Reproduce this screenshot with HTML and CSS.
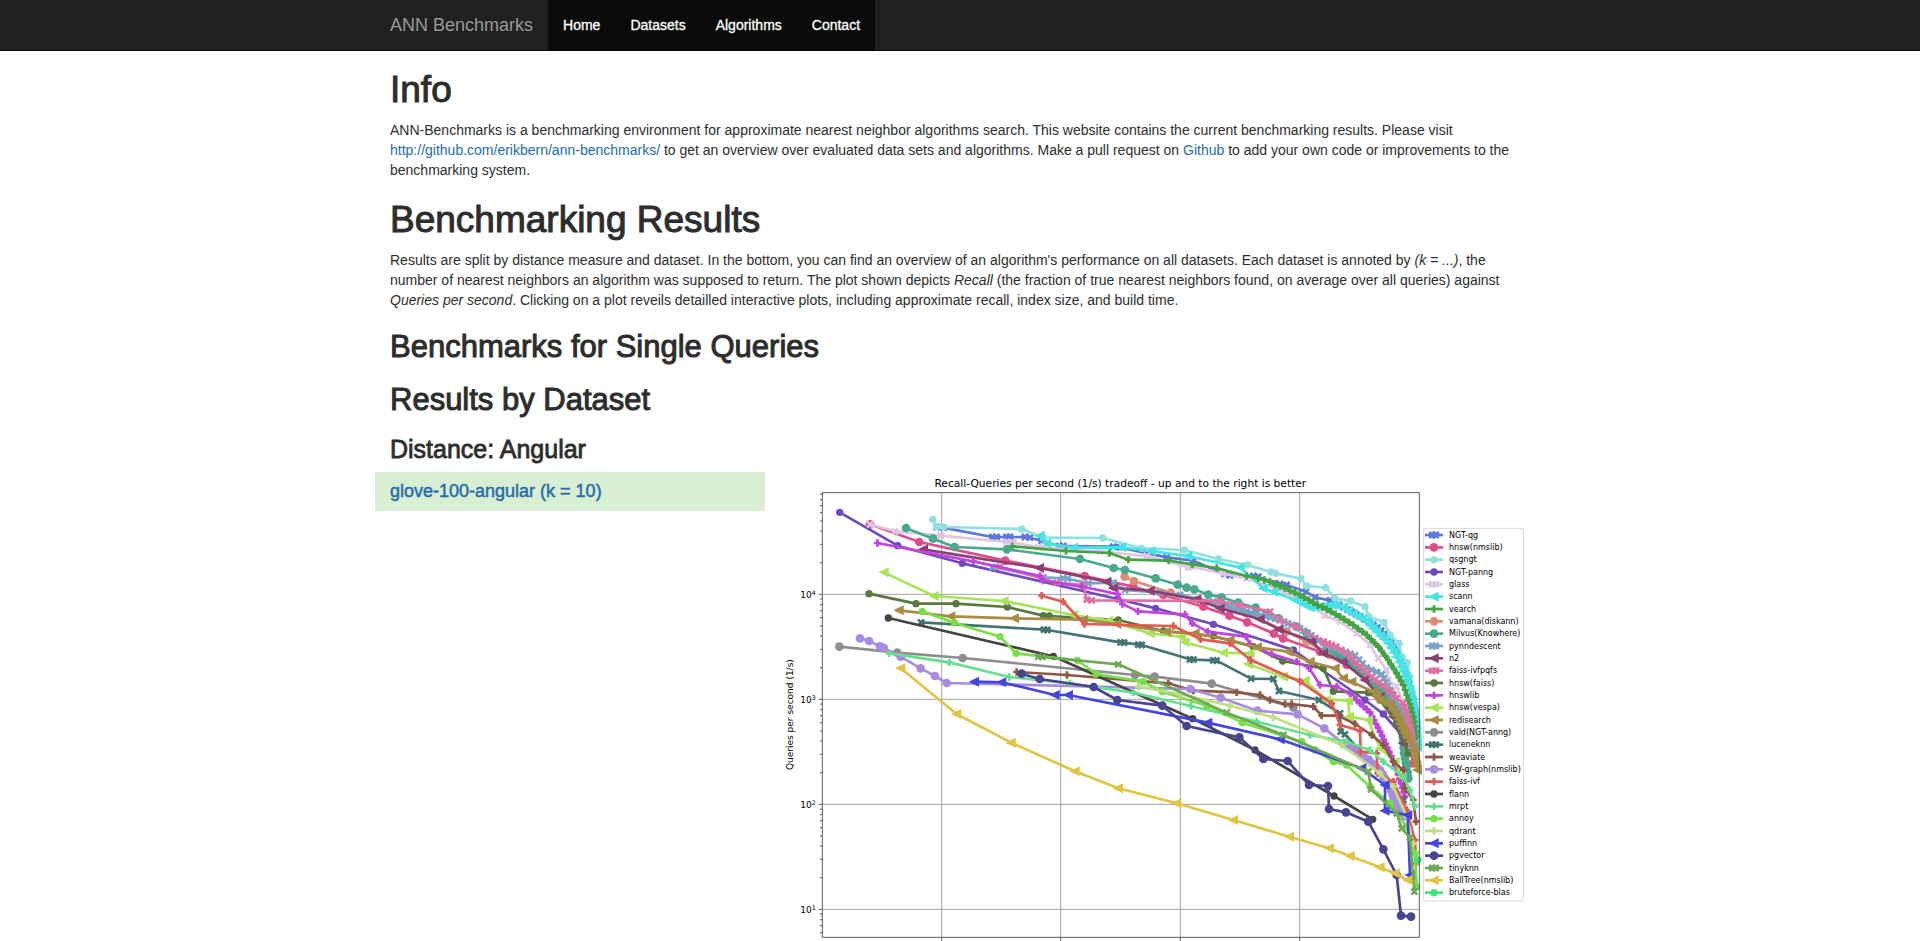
FILE: index.html
```html
<!DOCTYPE html>
<html lang="en">
<head>
<meta charset="utf-8">
<meta name="viewport" content="width=device-width, initial-scale=1">
<title>ANN-Benchmarks</title>
<link rel="stylesheet" href="styles.css">
</head>
<body>
<nav class="navbar">
  <div class="container navbar-inner">
    <a class="navbar-brand" href="#">ANN Benchmarks</a>
    <ul class="navbar-nav">
      <li><a href="#">Home</a></li>
      <li><a href="#datasets">Datasets</a></li>
      <li><a href="#algorithms">Algorithms</a></li>
      <li><a href="#contact">Contact</a></li>
    </ul>
  </div>
</nav>
<main class="container content">
  <h1>Info</h1>
  <p>ANN-Benchmarks is a benchmarking environment for approximate nearest neighbor algorithms search. This website contains the current benchmarking results. Please visit <a href="#">http://github.com/erikbern/ann-benchmarks/</a> to get an overview over evaluated data sets and algorithms. Make a pull request on <a href="#">Github</a> to add your own code or improvements to the benchmarking system.</p>
  <h1>Benchmarking Results</h1>
  <p>Results are split by distance measure and dataset. In the bottom, you can find an overview of an algorithm's performance on all datasets. Each dataset is annoted by <em>(k = ...)</em>, the number of nearest neighbors an algorithm was supposed to return. The plot shown depicts <em>Recall</em> (the fraction of true nearest neighbors found, on average over all queries) against <em>Queries per second</em>. Clicking on a plot reveils detailled interactive plots, including approximate recall, index size, and build time.</p>
  <h2>Benchmarks for Single Queries</h2>
  <h2 id="datasets">Results by Dataset</h2>
  <h3>Distance: Angular</h3>
  <div class="row">
    <div class="dataset">
      <h4><a href="#">glove-100-angular (k = 10)</a></h4>
    </div>
    <a class="plot" href="#" aria-label="glove-100-angular plot">
      <svg id="chart" class="chart" viewBox="0 6 2250 1407"></svg>
    </a>
  </div>
</main>
<script src="chart.js"></script>
</body>
</html>
```
FILE: styles.css
```css
* {
  box-sizing: border-box;
}

body {
  margin: 0;
  background: #fff;
  color: #2d2d2d;
  font-family: "Liberation Sans", Arial, sans-serif;
  font-size: 14px;
  line-height: 20px;
}

a {
  color: #286cab;
  text-decoration: none;
}

.container {
  width: 100%;
  max-width: 1170px;
  margin: 0 auto;
  padding: 0 15px;
}

.navbar {
  background: #202020;
  border-bottom: 1px solid #080808;
}

.navbar-inner {
  display: flex;
  flex-wrap: wrap;
  align-items: stretch;
}

.navbar-brand {
  padding: 15px 15px 15px 0;
  color: #9a9a9a;
  font-size: 18px;
}

.navbar-nav {
  display: flex;
  margin: 0;
  padding: 0;
  list-style: none;
  background: #0a0a0a;
}

.navbar-nav a {
  display: block;
  padding: 15px;
  color: #fff;
  -webkit-text-stroke: 0.3px;
}

.content {
  padding-top: 19px;
}

h1, h2, h3, h4 {
  margin: 20px 0 10px;
  font-weight: 500;
  -webkit-text-stroke: 1px;
}

h1 {
  font-size: 37px;
  line-height: 40px;
}

h1:first-child {
  margin-top: 0;
}

h2 {
  font-size: 31px;
  line-height: 33px;
}

h3 {
  font-size: 25px;
  line-height: 26px;
  -webkit-text-stroke: 0.8px;
}

h4 {
  margin: 10px 0;
  font-size: 18px;
  line-height: 19px;
  -webkit-text-stroke: 0.5px;
}

p {
  margin: 0 0 10px;
}

.row {
  display: grid;
  grid-template-columns: 1fr 2fr;
  align-items: start;
  margin: 0 -15px;
}

.dataset {
  display: flow-root;
  padding: 0 15px;
  background: #d9efd4;
}

.plot {
  display: block;
  padding: 0 15px;
}

.chart {
  display: block;
  width: 100%;
  font-family: "DejaVu Sans", sans-serif;
  fill: #000;
}

.chart .title {
  font-size: 32px;
  text-anchor: middle;
}

.chart .label {
  font-size: 27px;
}

.chart .power {
  font-size: 19px;
}

.chart .legend {
  font-size: 24px;
}

.chart .grid {
  fill: none;
  stroke: #a4a4a4;
  stroke-width: 3;
}

.chart .frame {
  fill: none;
  stroke: #5c5c5c;
  stroke-width: 3;
}

.chart .legend-box {
  fill: #fff;
  stroke: #d8d8d8;
  stroke-width: 3;
}

.chart .line {
  fill: none;
  stroke-width: 8;
  stroke-linejoin: round;
}
```
FILE: chart.js
```js
// Series: name, colour, marker, points, index from which markers are dense.
// Markers: x cross, + plus, < triangle, o small dot, O large dot.
const series = [
  ["NGT-qg", "#5b76dc", "x", "470,171 490,173 637,201 650,201 680,201 690,201 735,201 750,203 785,212 838,228 850,228 1000,230 1020,232 1160,262 1240,272 1333,312 1350,316 1420,318 1435,320 1485,340 1500,342 1520,345 1578,365 1605,382 1650,391 1690,412 1740,440 1780,465 1815,490 1845,530 1868,575 1888,640 1900,700 1910,820", 24],
  ["hnsw(nmslib)", "#e04c8a", "O", "270,163 418,216 676,272 914,318 1060,350 1150,375 1270,410 1348,437 1402,457 1482,491 1509,505 1620,545 1700,585 1760,625 1800,660 1850,730 1880,800 1900,880"],
  ["qsgngt", "#90e0e0", "o", "458,148 470,170 490,171 725,177 790,203 968,204 1085,235 1213,240 1315,267 1403,285 1473,306 1487,310 1563,326 1580,348 1637,353 1665,385 1712,393 1755,410 1767,440 1812,457 1830,495 1857,520 1866,560 1882,578 1890,620 1895,680 1903,760"],
  ["NGT-panng", "#7048c0", "o", "179,127 353,227 547,280 1013,387 1127,415 1300,463 1540,540 1755,690 1810,732 1870,800"],
  ["glass", "#e0c6e0", "x", "270,163 345,184 483,197 680,216 700,217 775,232 790,233 960,245 1100,258 1225,292 1235,290 1330,311 1400,325 1500,360 1600,410 1635,437 1680,455 1730,490 1770,525 1795,565 1820,600 1825,630 1850,650 1870,700 1890,780"],
  ["scann", "#45e3e3", "<", "780,197 800,220 880,233 1025,232 1113,243 1223,258 1380,292 1450,355 1480,365 1545,390 1590,412 1670,405 1690,412 1720,432 1760,455 1790,485 1825,520 1850,560 1865,590 1880,630 1890,660 1900,710 1908,760 1912,830", 9],
  ["vearch", "#44a344", "+", "697,229 858,243 988,249 1045,269 1166,272 1237,283 1310,294 1400,318 1435,325 1470,335 1515,355 1560,375 1600,398 1640,418 1680,440 1720,465 1760,495 1795,530 1825,570 1850,610 1870,645 1885,690 1900,740 1910,800", 8],
  ["vamana(diskann)", "#e08c72", "O", "1034,320 1062,333 1172,368 1250,390 1330,410 1400,430 1520,485 1580,515 1650,555 1720,590 1780,640 1820,680 1860,750 1885,820"],
  ["Milvus(Knowhere)", "#48a98c", "O", "378,174 459,206 524,231 681,238 900,267 1001,294 1035,300 1127,325 1193,344 1220,353 1243,358 1285,374 1325,382 1375,398 1427,413 1495,445 1550,470 1580,490 1640,530 1690,560 1740,600 1790,645 1830,690 1855,740 1868,800 1872,850 1880,890 1885,925", 18],
  ["pynndescent", "#78a4c4", "x", "637,291 790,322 850,325 863,326 925,340 1000,338 1035,360 1140,368 1200,375 1300,395 1400,425 1500,450 1560,475 1640,525 1725,557 1760,593 1805,613 1830,660 1860,720 1880,770 1890,830", 9],
  ["n2", "#8c3f73", "<", "430,238 778,294 980,335 1000,354 1110,362 1250,388 1320,415 1440,448 1497,478 1595,513 1630,550 1690,575 1755,630 1800,680 1840,740 1870,820"],
  ["faiss-ivfpqfs", "#e070a4", "x", "660,290 830,338 910,345 920,389 935,391 1320,393 1380,405 1470,425 1500,450 1550,470 1630,515 1668,530 1700,550 1730,580 1775,620 1820,655 1850,685 1870,700 1885,740 1895,790 1905,850", 10],
  ["hnsw(faiss)", "#587840", "o", "267,371 408,401 528,401 682,411 790,437 808,438 1015,450 1150,483 1300,498 1420,530 1508,573 1630,595 1660,664 1765,668 1800,690 1850,760 1885,850"],
  ["hnswlib", "#c044e0", "+", "292,219 580,274 780,318 790,332 905,350 1013,372 1027,402 1074,424 1215,433 1237,460 1283,485 1398,500 1410,522 1475,552 1550,575 1588,595 1620,645 1670,650 1710,670 1740,700 1770,727 1800,785 1828,845 1850,900 1875,980", 18],
  ["hnsw(vespa)", "#a8e35a", "<", "312,307 462,378 672,393 880,435 985,452 1110,490 1205,500 1215,517 1330,548 1410,550 1405,582 1510,620 1575,632 1640,689 1705,692 1708,740 1765,750 1800,835 1845,875 1865,920"],
  ["redisearch", "#a88c44", "<", "357,421 512,439 703,445 910,449 1010,462 1160,485 1245,490 1350,510 1432,532 1525,545 1590,575 1665,595 1690,625 1715,635 1780,665 1800,690 1830,705 1850,735 1880,800 1900,830 1912,900", 14],
  ["vald(NGT-anng)", "#8e8e8e", "O", "178,530 352,548 548,564 1065,615 1124,620 1295,641 1540,712"],
  ["luceneknn", "#427473", "x", "423,457 792,479 802,480 1022,517 1032,518 1075,524 1085,525 1230,568 1240,569 1300,571 1310,572 1413,626 1480,627 1497,663 1617,690 1680,730 1682,785 1695,793 1765,868 1810,920 1870,990"],
  ["weaviate", "#8c5844", "+", "710,606 861,615 1165,640 1240,662 1370,667 1440,675 1470,690 1515,702 1535,702 1600,710 1625,737 1675,737 1725,762 1775,795 1810,825 1840,875 1870,900 1875,955 1900,990 1908,1055"],
  ["SW-graph(nmslib)", "#a78ce0", "O", "240,505 267,513 300,529 312,534 362,560 422,595 465,618 500,639 1231,657 1322,683 1432,722 1553,733 1633,775 1690,820 1740,850 1800,900 1830,950 1845,1000 1870,1040", 13],
  ["faiss-ivf", "#e25a52", "+", "785,377 849,395 913,462 1180,468 1262,508 1350,520 1412,570 1561,635 1655,700 1680,765 1740,782 1742,845 1790,850 1793,910 1840,935 1880,1020 1905,1110 1908,1180"],
  ["flann", "#444444", "o", "325,444 820,559 1238,746 1425,840 1662,978 1778,1048"],
  ["mrpt", "#66df90", "+", "327,550 508,577 688,621 870,640 1060,668 1232,708 1430,755 1590,795 1700,815 1770,840 1810,875 1870,920 1890,960 1905,1010"],
  ["annoy", "#76e044", "o", "427,424 523,458 660,500 708,550 892,571 948,612 1089,635 1147,665 1280,707 1387,758 1565,815 1605,840 1660,875 1700,885 1770,950 1830,1000 1880,1070 1905,1150 1910,1250"],
  ["qdrant", "#c0df84", "+", "1075,650 1200,672 1350,707 1480,742 1685,825 1800,910 1840,950 1880,1040 1900,1120"],
  ["puffinn", "#4444e0", "<", "583,635 665,637 825,675 865,675 1283,758 1500,808 1745,895 1815,945 1815,1022 1883,1035 1890,1215"],
  ["pgvector", "#48448f", "O", "725,611 779,627 941,651 1012,690 1147,707 1220,768 1378,802 1450,867 1523,873 1587,945 1644,948 1647,1017 1698,1027 1765,1055 1810,1138 1850,1215 1863,1337 1893,1340"],
  ["tinyknn", "#70a858", "x", "775,560 787,561 1015,583 1340,728 1510,795 1765,905 1773,958 1850,1030 1865,1075 1890,1103 1903,1265"],
  ["BallTree(nmslib)", "#e0c444", "<", "362,595 530,732 693,818 885,904 1015,955 1190,1000 1360,1050 1528,1100 1648,1135 1710,1158 1800,1192 1845,1210 1883,1230"],
  ["bruteforce-blas", "#44e37a", "o", "1914,1170"]
];

const LEFT = 127, RIGHT = 1918, TOP = 68, BOTTOM = 1402;
const TEN = 1318, DECADE = 315;

const marker = {
  x: (x, y, c) => `<path d="M${x - 9} ${y - 9}l18 18m0 -18l-18 18" stroke="${c}" stroke-width="8"/>`,
  "+": (x, y, c) => `<path d="M${x - 10} ${y}h20m-10 -11v22" stroke="${c}" stroke-width="8"/>`,
  "<": (x, y, c) => `<path d="M${x - 17} ${y}l31 -15v30z" fill="${c}"/>`,
  o: (x, y, c) => `<circle cx="${x}" cy="${y}" r="11" fill="${c}"/>`,
  O: (x, y, c) => `<circle cx="${x}" cy="${y}" r="13" fill="${c}"/>`
};

function spread(points, from) {
  const out = [];
  points.forEach(([x, y], i) => {
    out.push([x, y]);
    if (i < from || i === points.length - 1) return;
    const [nx, ny] = points[i + 1];
    const steps = Math.floor(Math.hypot(nx - x, ny - y) / 13);
    for (let s = 1; s < steps; s++) {
      out.push([Math.round(x + (nx - x) * s / steps), Math.round(y + (ny - y) * s / steps)]);
    }
  });
  return out;
}

let svg = "";
[485, 842, 1201, 1559].forEach(x => {
  svg += `<path class="grid" d="M${x} ${TOP}V${BOTTOM}"/><path class="frame" d="M${x} ${BOTTOM}v11"/>`;
});
for (let p = 1; p <= 4; p++) {
  const y = TEN - DECADE * (p - 1);
  svg += `<path class="grid" d="M${LEFT} ${y}H${RIGHT}"/><path class="frame" d="M${LEFT - 11} ${y}h11"/>`;
  svg += `<text class="label" x="61" y="${y + 12}">10<tspan class="power" dy="-10">${p}</tspan></text>`;
}
for (let p = 0; p <= 4; p++) {
  for (let k = 2; k < 10; k++) {
    const y = Math.round(TEN - DECADE * (p - 1 + Math.log10(k)));
    if (y > TOP && y < BOTTOM) svg += `<path class="frame" d="M${LEFT - 7} ${y}h7"/>`;
  }
}
series.forEach(([, color, shape, data, from = Infinity]) => {
  const points = data.split(" ").map(p => p.split(",").map(Number));
  svg += `<polyline class="line" stroke="${color}" points="${data}"/>`;
  spread(points, from).forEach(([x, y]) => { svg += marker[shape](x, y, color); });
});
svg += `<path class="frame" d="M${LEFT} ${TOP}H${RIGHT}V${BOTTOM}H${LEFT}Z"/>`;
svg += `<text class="title" x="1021" y="51">Recall-Queries per second (1/s) tradeoff - up and to the right is better</text>`;
svg += `<text class="label" transform="translate(38 900) rotate(-90)">Queries per second (1/s)</text>`;
svg += `<rect class="legend-box" x="1930" y="175" width="300" height="1118" rx="4"/>`;
series.forEach(([name, color, shape], i) => {
  const y = 195 + i * 37;
  svg += `<path class="line" stroke="${color}" d="M1935 ${y}h54"/>`;
  if (shape === "x") svg += marker.x(1957, y, color) + marker.x(1967, y, color);
  else svg += marker[shape](1962, y, color);
  svg += `<text class="legend" x="2007" y="${y + 8}">${name}</text>`;
});
document.getElementById("chart").innerHTML = svg;
```
